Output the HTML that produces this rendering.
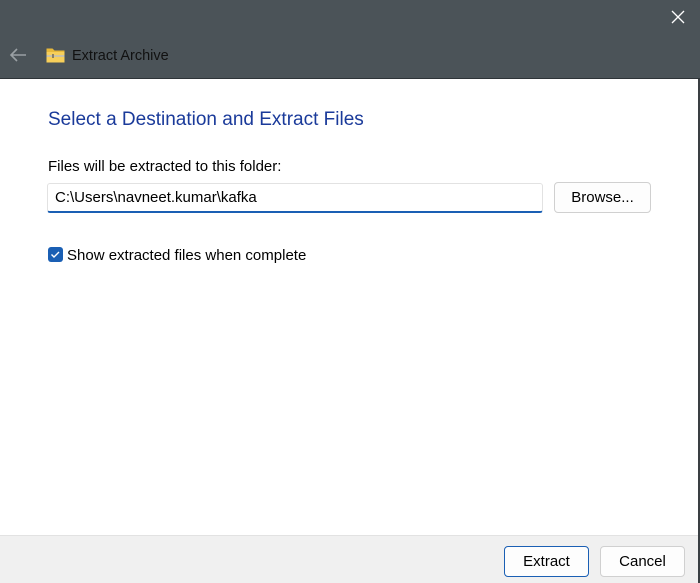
<!DOCTYPE html>
<html><head><style>
*{margin:0;padding:0;box-sizing:border-box}
body{width:700px;height:583px;position:relative;background:#fff;font-family:"Liberation Sans",sans-serif;overflow:hidden}
.hdr{position:absolute;left:0;top:0;width:700px;height:79px;background:#4b5358;border-bottom:1px solid #2e3438}
.t{position:absolute;font-size:15px;color:#000;white-space:nowrap}
.btn{position:absolute;height:31px;border:1px solid #d0d0d0;border-radius:4px;background:#fdfdfd;font-size:15px;text-align:center;line-height:29px}
</style></head><body>
<div class="hdr">
<svg style="position:absolute;left:8px;top:47px" width="20" height="16" viewBox="0 0 20 16"><path d="M18 8H3M9 2L3 8l6 6" stroke="#9aa0a4" stroke-width="1.6" fill="none"/></svg>
<svg style="position:absolute;left:46px;top:47px" width="19" height="16" viewBox="0 0 19 16"><path d="M0.5 1.5h6l2 2h10v12h-18z" fill="#e8b93a"/><rect x="0.5" y="5" width="18" height="10.5" fill="#f7cf5a"/><rect x="0.5" y="8" width="18" height="2" fill="#c9c2a8"/><rect x="6" y="7" width="2" height="4" fill="#8a8066"/></svg>
<div class="t" style="left:72px;top:48px;color:#111;font-size:14.5px">Extract Archive</div>
<svg style="position:absolute;left:671px;top:10px" width="14" height="14" viewBox="0 0 14 14"><path d="M1 1l12 12M13 1L1 13" stroke="#fff" stroke-width="1.3"/></svg>
</div>
<div style="position:absolute;right:0;top:79px;width:2px;height:504px;background:#3a3f43"></div>
<div class="t" style="left:48px;top:109px;font-size:19px;color:#1a3a9a">Select a Destination and Extract Files</div>
<div class="t" style="left:48px;top:158px">Files will be extracted to this folder:</div>
<div style="position:absolute;left:47px;top:183px;width:496px;height:30px;border:1px solid #e2e2e2;border-bottom:2px solid #1a5fb4;border-radius:3px;background:#fff"></div>
<div class="t" style="left:55px;top:189px">C:\Users\navneet.kumar\kafka</div>
<div class="btn" style="left:554px;top:182px;width:97px">Browse...</div>
<div style="position:absolute;left:48px;top:247px;width:15px;height:15px;background:#1a5fb4;border-radius:3px"></div>
<svg style="position:absolute;left:48px;top:247px" width="15" height="15" viewBox="0 0 15 15"><path d="M3.5 7.5l2.5 2.5 5-5" stroke="#fff" stroke-width="1.4" fill="none"/></svg>
<div class="t" style="left:67px;top:247px">Show extracted files when complete</div>
<div style="position:absolute;left:0;top:535px;width:698px;height:48px;background:#f0f0f0;border-top:1px solid #e2e2e2"></div>
<div class="btn" style="left:504px;top:546px;width:85px;border-color:#1a5fb4">Extract</div>
<div class="btn" style="left:600px;top:546px;width:85px">Cancel</div>
</body></html>
